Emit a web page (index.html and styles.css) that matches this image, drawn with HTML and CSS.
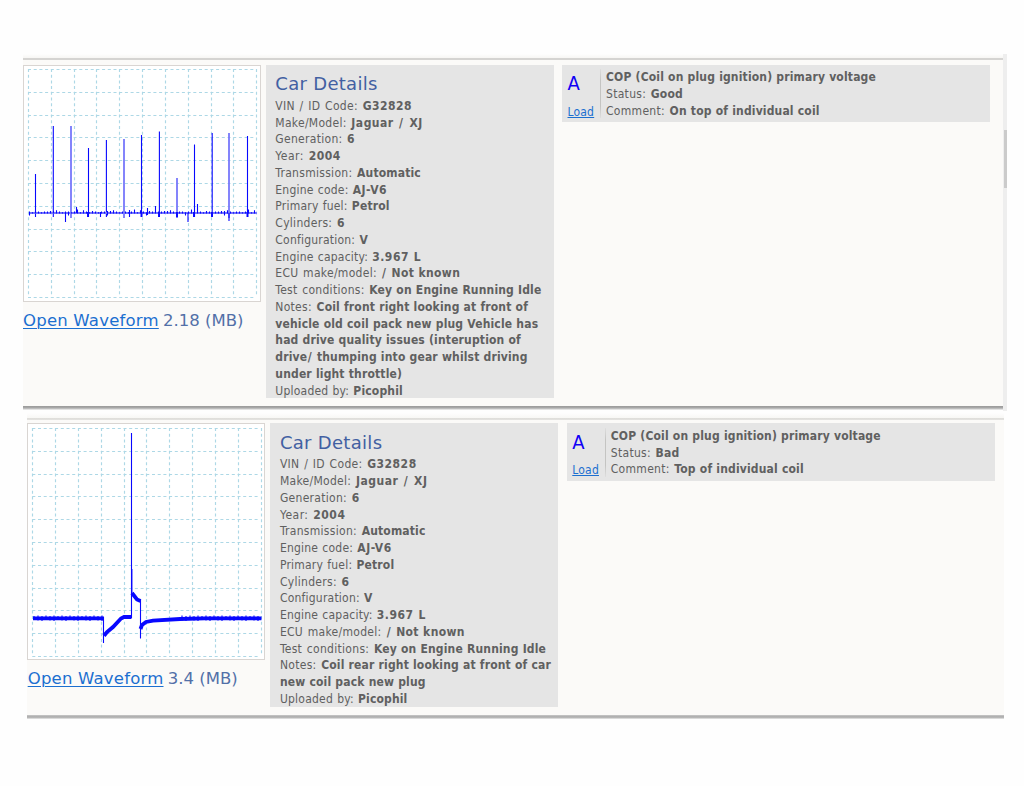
FILE: index.html
```
<!DOCTYPE html>
<html lang="en">
<head>
<meta charset="utf-8">
<title>Waveform library</title>
<link rel="stylesheet" href="styles.css">
</head>
<body>
<main class="results">
  <div class="viewport">
    <article class="record">
      <section class="preview">
        <svg class="wave" viewBox="24 66 236 235" id="wave-a"></svg>
        <p class="open"><a href="#">Open Waveform</a> <span class="size">2.18 (MB)</span></p>
      </section>
      <section class="details">
        <h2>Car Details</h2>
        <p class="vin">VIN / ID Code: <b class="wide">G32828</b></p>
        <p>Make/Model: <b class="wide">Jaguar <span class="slash">/</span> XJ</b></p>
        <p>Generation: <b>6</b></p>
        <p class="year">Year: <b class="wide">2004</b></p>
        <p>Transmission: <b>Automatic</b></p>
        <p class="tight">Engine code: <b class="wide">AJ-V6</b></p>
        <p class="tight">Primary fuel: <b>Petrol</b></p>
        <p>Cylinders: <b>6</b></p>
        <p class="tight">Configuration: <b>V</b></p>
        <p class="tight">Engine capacity: <b class="wide">3.967 L</b></p>
        <p>ECU make/model: <b class="ecu"><span class="slash">/</span> Not known</b></p>
        <p>Test conditions: <b>Key on Engine Running Idle</b></p>
        <p>Notes: <b>Coil front right looking at front of<br>vehicle old coil pack new plug Vehicle has<br>had drive quality issues (interuption of<br>drive<span class="slash">/</span> thumping into gear whilst driving<br>under light throttle)</b></p>
        <p class="tight">Uploaded by: <b>Picophil</b></p>
      </section>
      <section class="channel">
        <div class="key"><span class="letter">A</span><a href="#">Load</a></div>
        <div class="info">
          <p><b>COP (Coil on plug ignition) primary voltage</b></p>
          <p>Status: <b>Good</b></p>
          <p>Comment: <b>On top of individual coil</b></p>
        </div>
      </section>
    </article>
    <div class="scrollbar"><div class="thumb"></div></div>
  </div>
  <article class="record second">
    <section class="preview">
      <svg class="wave" viewBox="28 424 236 235" id="wave-b"></svg>
      <p class="open"><a href="#">Open Waveform</a> <span class="size">3.4 (MB)</span></p>
    </section>
    <section class="details">
      <h2>Car Details</h2>
      <p class="vin">VIN / ID Code: <b class="wide">G32828</b></p>
      <p>Make/Model: <b class="wide">Jaguar <span class="slash">/</span> XJ</b></p>
      <p>Generation: <b>6</b></p>
      <p class="year">Year: <b class="wide">2004</b></p>
      <p>Transmission: <b>Automatic</b></p>
      <p class="tight">Engine code: <b class="wide">AJ-V6</b></p>
      <p class="tight">Primary fuel: <b>Petrol</b></p>
      <p>Cylinders: <b>6</b></p>
      <p class="tight">Configuration: <b>V</b></p>
      <p class="tight">Engine capacity: <b class="wide">3.967 L</b></p>
      <p>ECU make/model: <b class="ecu"><span class="slash">/</span> Not known</b></p>
      <p>Test conditions: <b>Key on Engine Running Idle</b></p>
      <p>Notes: <b>Coil rear right looking at front of car<br>new coil pack new plug</b></p>
      <p class="tight">Uploaded by: <b>Picophil</b></p>
    </section>
    <section class="channel">
      <div class="key"><span class="letter">A</span><a href="#">Load</a></div>
      <div class="info">
        <p><b>COP (Coil on plug ignition) primary voltage</b></p>
        <p>Status: <b>Bad</b></p>
        <p>Comment: <b>Top of individual coil</b></p>
      </div>
    </section>
  </article>
</main>
<script src="waves.js"></script>
</body>
</html>
```

FILE: styles.css
```
* { box-sizing: border-box; }
body {
  margin: 0;
  background: #fefefe;
  color: #606060;
  font-family: "DejaVu Sans Condensed", "DejaVu Sans", sans-serif;
  font-size: 12px;
  line-height: 16.75px;
}
p, h2 { margin: 0; white-space: nowrap; }
a { color: #1b6fd0; text-decoration: underline; }
.results { padding-top: 54px; }
.viewport { display: flex; width: 984px; height: 357px; margin-left: 23px; }
.record {
  display: flex;
  align-items: flex-start;
  width: 980px;
  height: 356px;
  padding-top: 11px;
  background: linear-gradient(to bottom, #fefefe 0, #f7f6f4 4px, #d5d4d2 4px, #d5d4d2 6px, #fbfaf8 6px, #fbfaf8 352px, #999 352px, #aaa 354px, #d0d0d0 355px, #f3f3f3 356px);
}
.second {
  width: 977px;
  height: 306px;
  margin: 1.5px 0 0 27px;
  padding-top: 10.5px;
  background: linear-gradient(to bottom, #fefefe 0, #f8f7f5 5px, #deddda 5px, #e4e3e1 7px, #fbfaf8 7px, #fbfaf8 302px, #c8c8c8 302px, #a9a9a9 304px, #c4c4c4 305px, #eee 306px);
}
.preview { width: 238px; flex: none; }
.wave { display: block; width: 238px; height: 237px; border: 1px solid #d9d5d2; background: #fff; }
.open {
  padding-top: 7px;
  color: #5270a8;
  font-family: "DejaVu Sans", sans-serif;
  font-size: 16.5px;
  line-height: 24px;
}
.open a { letter-spacing: 0.21px; text-underline-offset: 2px; text-decoration-thickness: 1px; }
.size { margin-left: -1px; }
.second .open { padding-left: 0.7px; }
.details {
  flex: none;
  width: 288px;
  height: 333px;
  margin-left: 5px;
  padding: 8.4px 0 0 9.3px;
  background: #e5e5e5;
}
.second .details { height: 283.5px; margin-left: 5.4px; padding: 8.9px 0 0 9.5px; }
.details p, .info p { letter-spacing: 0.3px; word-spacing: 0.9px; }
.details .tight { letter-spacing: 0.22px; word-spacing: 0.5px; }
.details .vin { letter-spacing: 0.33px; word-spacing: 0.9px; }
.details .year { letter-spacing: 0.5px; }
.details b, .info b { letter-spacing: 0.16px; word-spacing: 0.15px; }
.details .wide { letter-spacing: 0.5px; word-spacing: 0.7px; }
.details .ecu { letter-spacing: 0.35px; }
.slash { padding: 0 1px 0 0.5px; }
.details h2 {
  height: 24.5px;
  color: #4260a2;
  font-family: "DejaVu Sans", sans-serif;
  font-size: 18px;
  font-weight: 400;
  letter-spacing: 0.3px;
  line-height: 22px;
}
.channel { display: flex; flex: none; width: 428px; height: 57px; margin-left: 8px; padding: 4px 0 0 5.5px; background: #e5e5e5; }
.second .channel { height: 57.5px; margin-left: 8.6px; padding: 4.8px 0 0 5.3px; }
.key { display: flex; flex-direction: column; width: 33.5px; height: 49px; border-right: 1.5px solid; border-image: linear-gradient(#e0e0e0, #c4c4c2 25%, #c4c4c2 75%, #e0e0e0) 1; }
.key a { letter-spacing: 0.2px; }
.letter { flex: none; height: 34.5px; color: #1000f5; font-size: 20px; line-height: 29px; }
.second .letter { height: 34px; }
.key a { flex: none; }
.info { padding-left: 5px; }
.scrollbar { width: 4px; height: 357px; padding: 76px 0 0 1px; background: #eeeeee; }
.thumb { height: 58px; background: #cbcbcb; }
.grid { fill: none; stroke: #add8e6; stroke-width: 1.15; stroke-dasharray: 3 2.7; }
.trace { fill: none; stroke: #0808ff; stroke-width: 1.1; }
.soft { stroke: #7777fb; stroke-width: 1.8; }
.thick { stroke-width: 3.8; }
.foot { stroke-width: 1.9; }
```

FILE: waves.js
```
function draw(svg, d, cls) {
  const path = document.createElementNS('http://www.w3.org/2000/svg', 'path');
  path.setAttribute('d', d);
  path.setAttribute('class', cls);
  svg.appendChild(path);
}

function grid(svg, x, y) {
  let d = '';
  for (let i = 0; i <= 10; i++) {
    const gx = Math.round(x + i * 22.82) + 0.5;
    const gy = Math.round(y + i * 22.8) + 0.5;
    d += `M${gx} ${y}V${y + 228}M${x} ${gy}H${x + 228}`;
  }
  draw(svg, d, 'grid');
}

const a = document.getElementById('wave-a');
grid(a, 28, 69);
const spikes = [[35.5,174,0],[53.3,126,0],[71,126,1],[88.5,148,0],[106.4,140,0],[124,139,1],[141.5,135,0],[159.4,131.5,0],[177,178,1],[194.5,144.5,0],[212.2,133,0],[229,133,1],[247.5,136,0]];
spikes.forEach(([x, top, soft]) => draw(a, `M${x} ${top}V${soft ? 218 : 217}`, soft ? 'trace soft' : 'trace'));
draw(a, 'M29 213H257', 'trace soft');
const bumps = [1, 0, 2, 1, 4, 0, 1, 3, 1, 0, 2, 1, 1, 0, 3, 1, 2, 0, 1];
let noise = '';
for (let i = 0; i < 76; i++) {
  const x = 29.5 + i * 3;
  noise += `M${x} ${212.3 - bumps[i * 5 % 19] * 0.7}V${i * 11 % 13 === 0 ? 215.5 : 213.5}`;
}
noise += 'M65.5 213V222M76.5 207V213M188 213V222M197.5 204V213M155.5 206V213M147.5 208V215M129.5 210V217M100.5 212V217M229 213V221';
draw(a, noise, 'trace');
draw(a, 'M88 212V217M141.5 212V217M159 212V217M177 212V217M194 212V217M212 212V217M247.5 212V217', 'trace foot');

const b = document.getElementById('wave-b');
grid(b, 32.3, 428);
draw(b, 'M131.5 433V618M103.5 617V643M140.5 599V638.5M131.9 569V593', 'trace');
draw(b, 'M33 618.3H104M140.5 629L142 625L146 622L153 620.7L180 619L205 618.3H261.5', 'trace thick');
draw(b, 'M104 635.8L107 632L113 627L121 618.5L124 617H131.5M132 593L137 599.5L140.5 601', 'trace thick');
let ripple = '';
for (let i = 0; i < 57; i++) {
  const x = 34 + i * 4;
  if (x < 103 || x > 178) ripple += `M${x} ${616 - i % 2 * 0.5}V${620 + i * 7 % 3 * 0.5}`;
}
draw(b, ripple, 'trace');
```
